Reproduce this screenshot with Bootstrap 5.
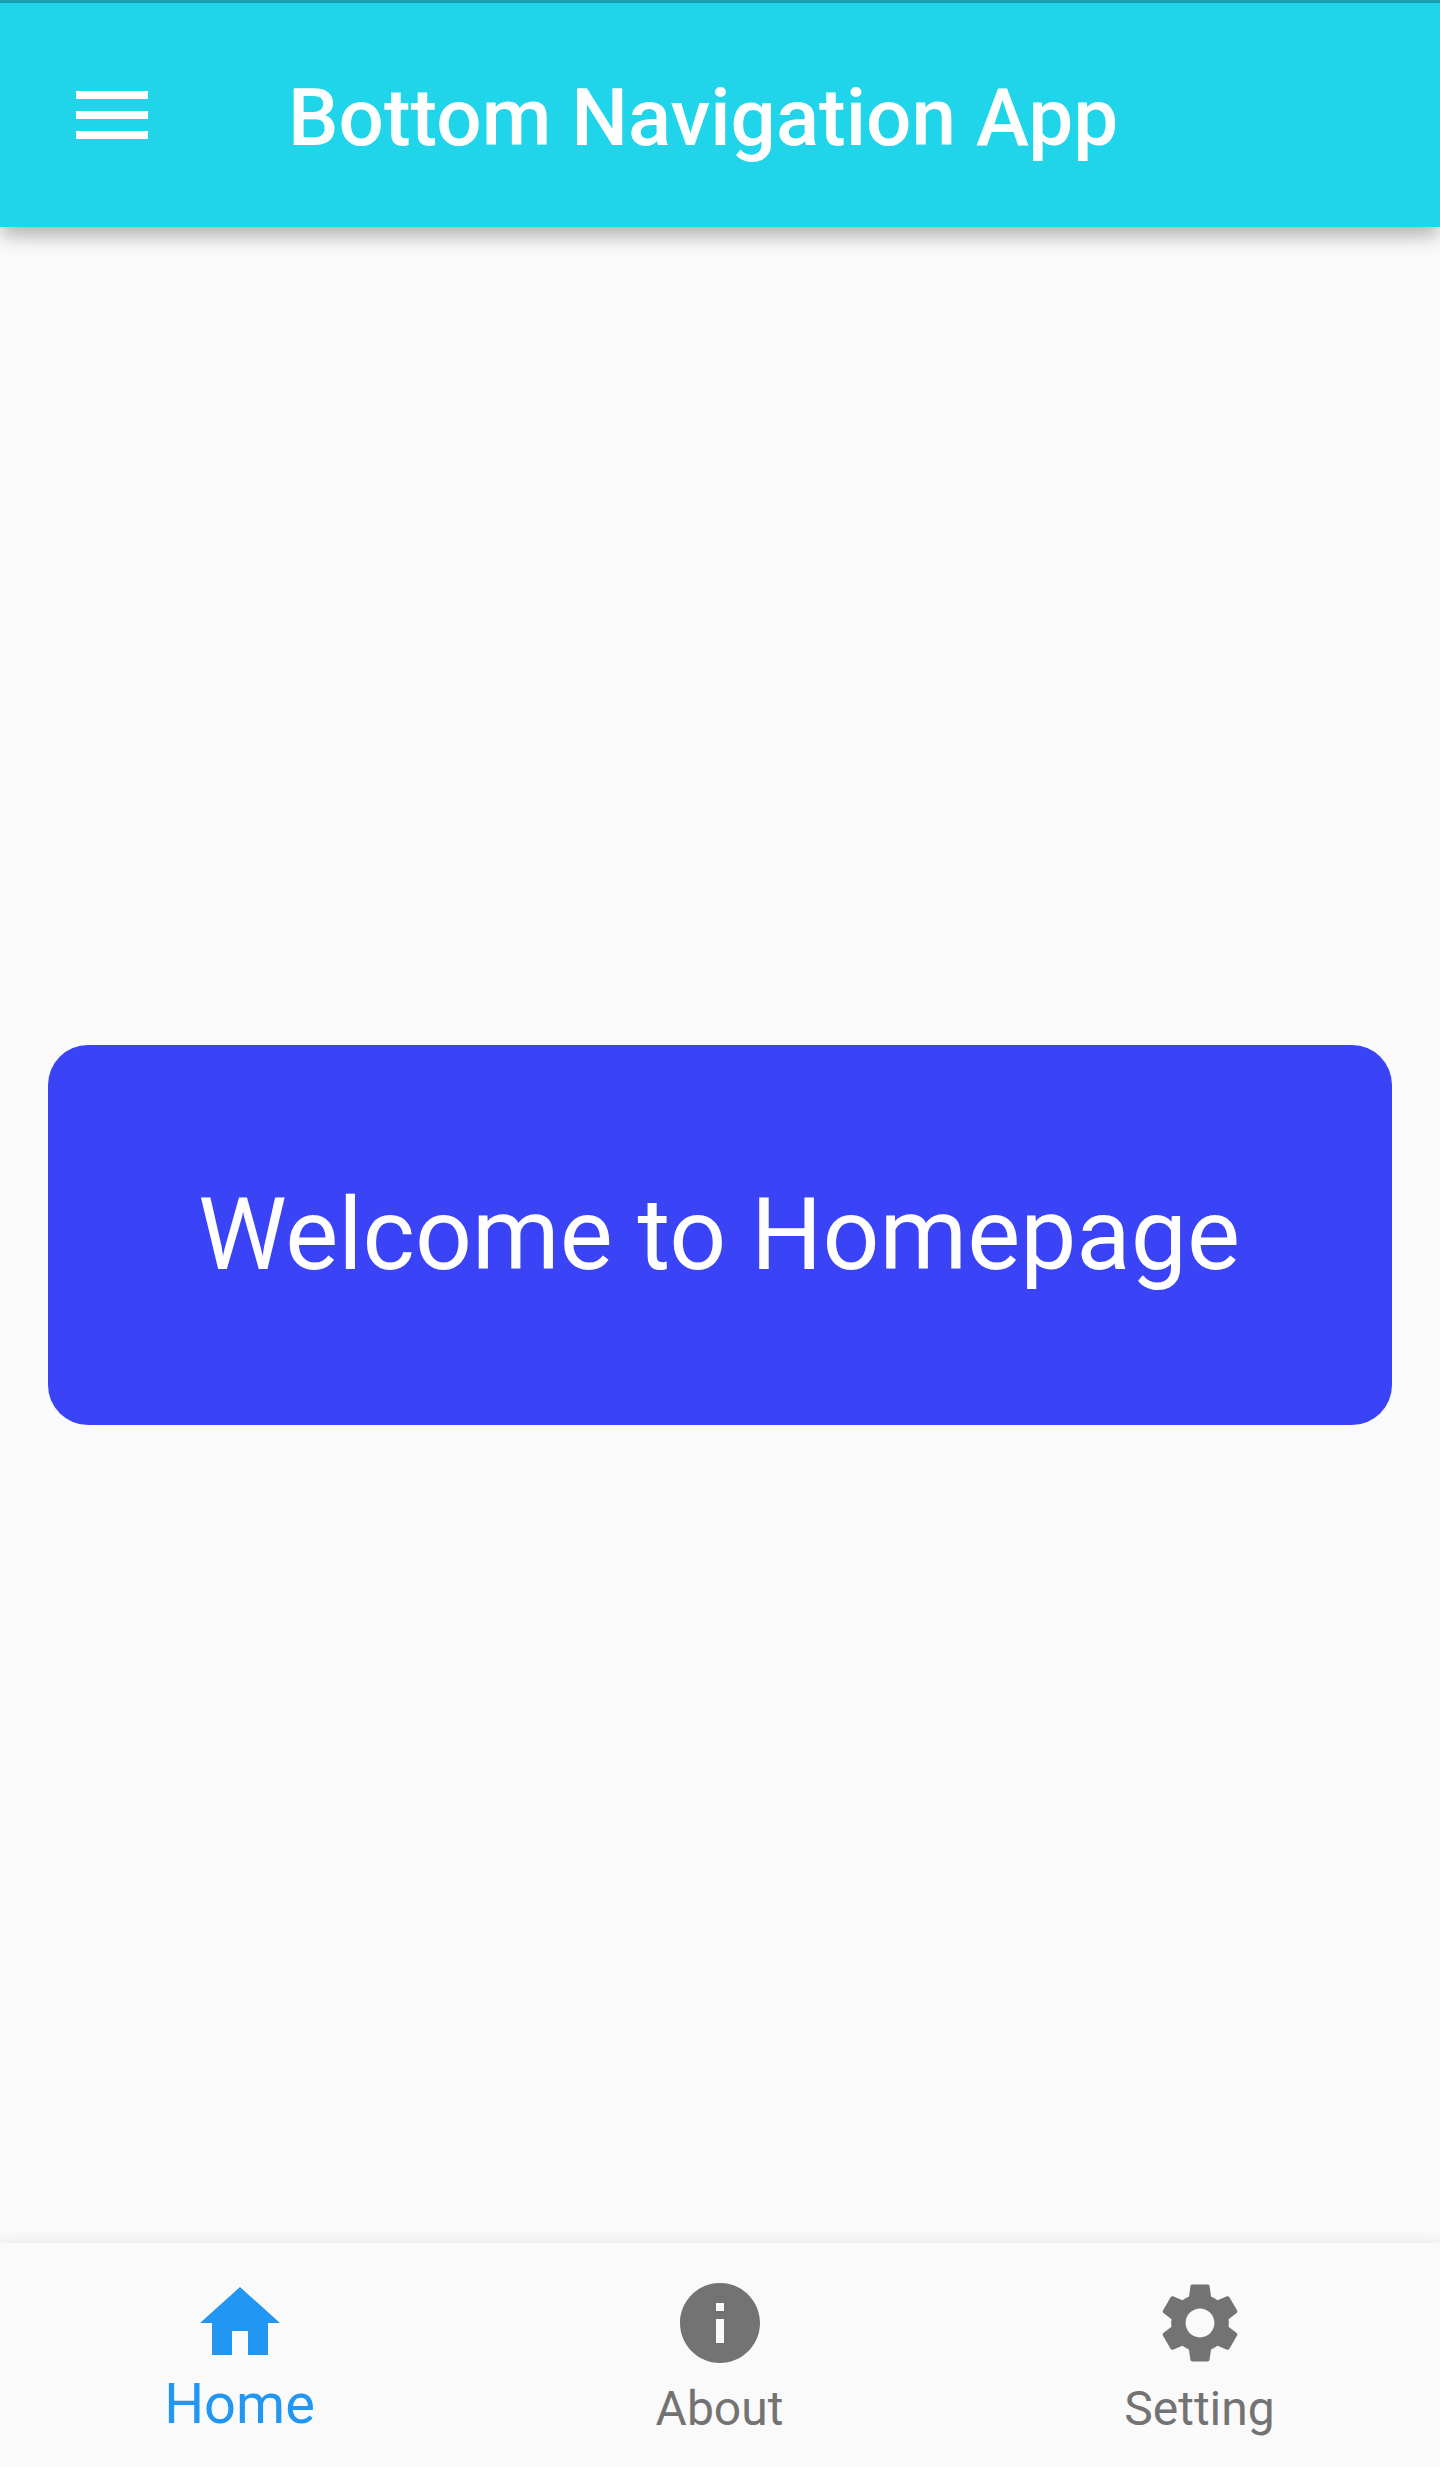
<!DOCTYPE html>
<html lang="en">
<head>
<meta charset="utf-8">
<meta name="viewport" content="width=device-width, initial-scale=1">
<title>Bottom Navigation App</title>
<link href="https://cdn.jsdelivr.net/npm/bootstrap@5.3.0/dist/css/bootstrap.min.css" rel="stylesheet">
<style>
body{font-family:Roboto,sans-serif;background:#fafafa;height:2467px;overflow:hidden}
.app-bar{height:227px;background:#20d4e9;border-top:3px solid #18a0b0;padding:0 0 0 64px;box-shadow:0 8px 16px -4px rgba(0,0,0,.2),0 14px 16px rgba(0,0,0,.1),0 3px 34px rgba(0,0,0,.06);z-index:1}
.app-title{font-size:80px;font-weight:500;line-height:1;margin-left:128px;padding-top:5px;color:#fff}
.welcome{height:380px;border-radius:40px;background:#3a44f6;font-size:100px;line-height:1;color:#fff;margin:0 48px;padding:0 2px 1px 0}
.tabs{height:224px;background:#fafafa;box-shadow:0 0 16px rgba(0,0,0,.09)}
.tab-item{color:#737373;font-size:48px;line-height:56px;padding-top:32px}
.tab-item span{margin:10px 1px 0 0}
.tab-item.active{color:#2196f3;font-size:56px}
.tab-item.active span{margin-top:5px}
</style>
</head>
<body class="d-flex flex-column">
<header class="app-bar d-flex align-items-center position-relative flex-shrink-0">
<svg width="96" height="96" viewBox="0 0 24 24" fill="#fff"><path d="M3 18h18v-2H3v2zm0-5h18v-2H3v2zm0-7v2h18V6H3z"/></svg>
<h1 class="app-title mb-0">Bottom Navigation App</h1>
</header>
<main class="flex-grow-1 d-flex flex-column justify-content-center">
<div class="welcome d-flex align-items-center justify-content-center">Welcome to Homepage</div>
</main>
<nav class="tabs d-flex flex-shrink-0">
<a class="tab-item active col-4 d-flex flex-column align-items-center text-decoration-none" href="#"><svg width="96" height="96" viewBox="0 0 24 24" fill="currentColor"><path d="M10 20v-6h4v6h5v-8h3L12 3 2 12h3v8z"/></svg><span>Home</span></a>
<a class="tab-item col-4 d-flex flex-column align-items-center text-decoration-none" href="#"><svg width="96" height="96" viewBox="0 0 24 24" fill="currentColor"><path d="M12 2C6.48 2 2 6.48 2 12s4.48 10 10 10 10-4.48 10-10S17.52 2 12 2zm1 15h-2v-6h2v6zm0-8h-2V7h2v2z"/></svg><span>About</span></a>
<a class="tab-item col-4 d-flex flex-column align-items-center text-decoration-none" href="#"><svg width="96" height="96" viewBox="0 0 24 24" fill="currentColor"><path d="M19.14,12.94c0.04-0.3,0.06-0.61,0.06-0.94c0-0.32-0.02-0.64-0.07-0.94l2.03-1.58c0.18-0.14,0.23-0.41,0.12-0.61l-1.92-3.32c-0.12-0.22-0.37-0.29-0.59-0.22l-2.39,0.96c-0.5-0.38-1.03-0.7-1.62-0.94L14.4,2.81c-0.04-0.24-0.24-0.41-0.48-0.41h-3.84c-0.24,0-0.43,0.17-0.47,0.41L9.25,5.35C8.66,5.59,8.12,5.92,7.63,6.29L5.24,5.33c-0.22-0.08-0.47,0-0.59,0.22L2.74,8.87C2.62,9.08,2.66,9.34,2.86,9.48l2.03,1.58C4.84,11.36,4.8,11.69,4.8,12s0.02,0.64,0.07,0.94l-2.03,1.58c-0.18,0.14-0.23,0.41-0.12,0.61l1.92,3.32c0.12,0.22,0.37,0.29,0.59,0.22l2.39-0.96c0.5,0.38,1.03,0.7,1.62,0.94l0.36,2.54c0.05,0.24,0.24,0.41,0.48,0.41h3.84c0.24,0,0.44-0.17,0.47-0.41l0.36-2.54c0.59-0.24,1.13-0.56,1.62-0.94l2.39,0.96c0.22,0.08,0.47,0,0.59-0.22l1.92-3.32c0.12-0.22,0.07-0.47-0.12-0.61L19.14,12.94zM12,15.6c-1.98,0-3.6-1.62-3.6-3.6s1.62-3.6,3.6-3.6s3.6,1.62,3.6,3.6S13.98,15.6,12,15.6z"/></svg><span>Setting</span></a>
</nav>
<script src="https://cdn.jsdelivr.net/npm/bootstrap@5.3.0/dist/js/bootstrap.bundle.min.js"></script>
</body>
</html>
